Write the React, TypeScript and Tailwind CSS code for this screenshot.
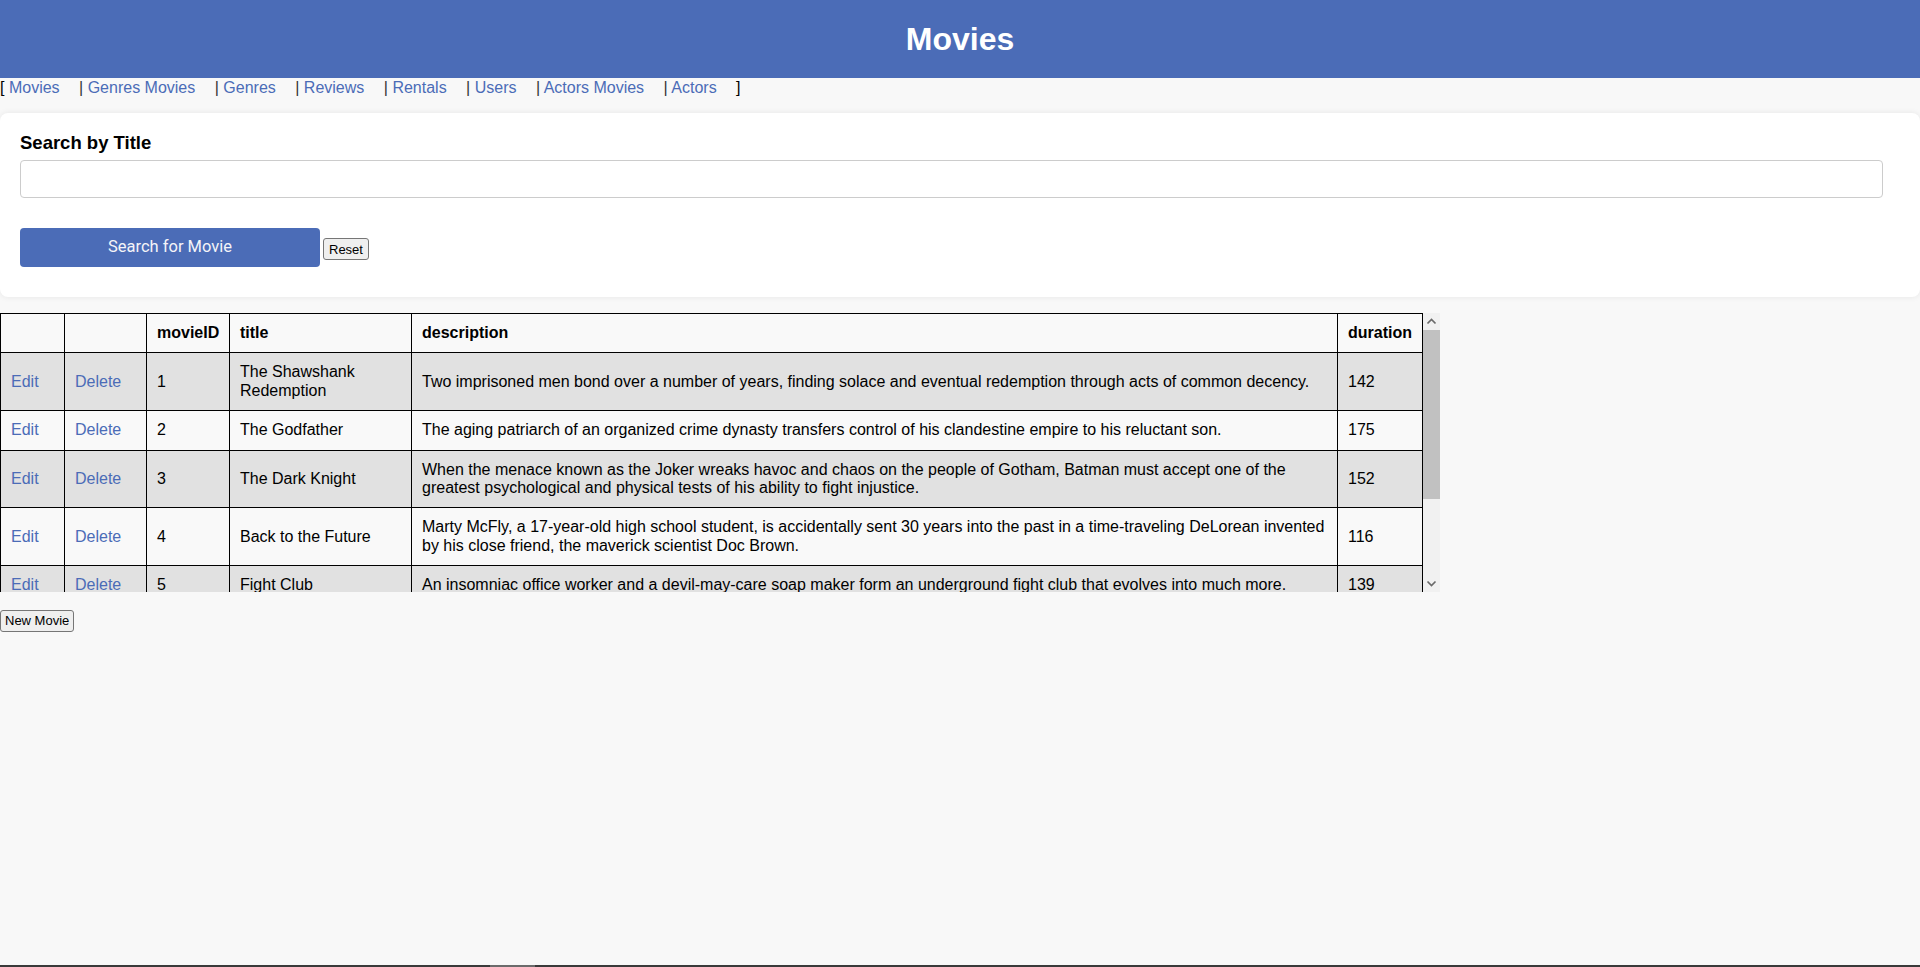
import React from "react";

const movies = [
  { id: 1, title: "The Shawshank Redemption", desc: "Two imprisoned men bond over a number of years, finding solace and eventual redemption through acts of common decency.", dur: 142 },
  { id: 2, title: "The Godfather", desc: "The aging patriarch of an organized crime dynasty transfers control of his clandestine empire to his reluctant son.", dur: 175 },
  { id: 3, title: "The Dark Knight", desc: "When the menace known as the Joker wreaks havoc and chaos on the people of Gotham, Batman must accept one of the greatest psychological and physical tests of his ability to fight injustice.", dur: 152 },
  { id: 4, title: "Back to the Future", desc: "Marty McFly, a 17-year-old high school student, is accidentally sent 30 years into the past in a time-traveling DeLorean invented by his close friend, the maverick scientist Doc Brown.", dur: 116 },
  { id: 5, title: "Fight Club", desc: "An insomniac office worker and a devil-may-care soap maker form an underground fight club that evolves into much more.", dur: 139 },
  { id: 6, title: "Inception", desc: "A thief who steals corporate secrets through the use of dream-sharing technology is given the inverse task of planting an idea into the mind of a C.E.O., but his tragic past may doom the project.", dur: 148 },
  { id: 7, title: "Pulp Fiction", desc: "The lives of two mob hitmen, a boxer, a gangster and his wife, and a pair of diner bandits intertwine in four tales of violence and redemption, told out of order.", dur: 154 },
];

const navItems = ["Movies", "Genres Movies", "Genres", "Reviews", "Rentals", "Users", "Actors Movies", "Actors"];

function Chevron({ up }: { up: boolean }) {
  return (
    <svg width="17" height="17" viewBox="0 0 17 17" className="block">
      <path
        d={up ? "M4.5 10.5 L8.5 6.5 L12.5 10.5" : "M4.5 6.5 L8.5 10.5 L12.5 6.5"}
        fill="none"
        stroke="#6a6a6a"
        strokeWidth="1.7"
      />
    </svg>
  );
}

export default function App() {
  return (
    <div className="min-h-screen flex flex-col bg-[#f8f8f8] text-black font-['Liberation_Sans',Arial,sans-serif]">
      <header className="h-[78px] bg-[#4b6cb7] flex items-center justify-center">
        <h1 className="text-[32px] font-bold text-white leading-none">Movies</h1>
      </header>

      <nav className="text-[16px] leading-[18px] mt-[1px] text-[#333] whitespace-nowrap">
        <span className="text-black">[</span>{" "}
        {navItems.map((n, i) => (
          <React.Fragment key={n}>
            {i > 0 && <>|{" "}</>}
            <a href="#" className="text-[#4b6cb7] mr-[15px]">{n}</a>{" "}
          </React.Fragment>
        ))}
        <span className="text-black">]</span>
      </nav>

      <section className="mt-[16px] bg-white rounded-[8px] shadow-[0_0_6px_rgba(0,0,0,0.08)] pt-[20px] px-[20px] pb-[30px]">
        <label className="block text-[18.5px] font-bold leading-[20px] mb-[7px]">Search by Title</label>
        <input
          type="text"
          className="block w-[calc(100%-17px)] h-[38px] border border-[#ccc] rounded-[4px] bg-white px-2 outline-none"
        />
        <div className="flex items-center gap-[3px] mt-[30px]">
          <button className="w-[300px] h-[39px] bg-[#4b6cb7] text-[#f4f4f8] rounded-[4px] text-[16.5px] font-['Roboto',sans-serif]">
            Search for Movie
          </button>
          <button className="h-[22px] bg-[#efefef] border border-[#767676] rounded-[3px] px-[5px] text-[13px] leading-[15px] text-black mt-[3px]">
            Reset
          </button>
        </div>
      </section>

      <div className="mt-[16px] w-[1440px] h-[279px] flex">
        <div className="w-[1423px] h-full overflow-hidden">
          <table className="w-full table-fixed border-collapse text-[16px] leading-[18.4px]">
            <colgroup>
              <col className="w-[64px]" />
              <col className="w-[82px]" />
              <col className="w-[83px]" />
              <col className="w-[182px]" />
              <col />
              <col className="w-[85px]" />
            </colgroup>
            <thead>
              <tr className="bg-[#f9f9f9]">
                <th className="border border-black p-[10px] text-left font-bold"></th>
                <th className="border border-black p-[10px] text-left font-bold"></th>
                <th className="border border-black p-[10px] text-left font-bold">movieID</th>
                <th className="border border-black p-[10px] text-left font-bold">title</th>
                <th className="border border-black p-[10px] text-left font-bold">description</th>
                <th className="border border-black p-[10px] text-left font-bold">duration</th>
              </tr>
            </thead>
            <tbody>
              {movies.map((m, i) => (
                <tr key={m.id} className={i % 2 === 0 ? "bg-[#e1e1e1]" : "bg-[#f9f9f9]"}>
                  <td className="border border-black p-[10px]"><a href="#" className="text-[#4b6cb7]">Edit</a></td>
                  <td className="border border-black p-[10px]"><a href="#" className="text-[#4b6cb7]">Delete</a></td>
                  <td className="border border-black p-[10px]">{m.id}</td>
                  <td className="border border-black p-[10px]">{m.title}</td>
                  <td className="border border-black p-[10px]">{m.desc}</td>
                  <td className="border border-black p-[10px]">{m.dur}</td>
                </tr>
              ))}
            </tbody>
          </table>
        </div>
        <div className="w-[17px] h-full bg-[#f1f1f1] flex flex-col">
          <Chevron up />
          <div className="h-[169px] bg-[#c1c1c1]" />
          <div className="flex-1" />
          <Chevron up={false} />
        </div>
      </div>

      <div className="mt-[16px]">
        <button className="h-[22px] bg-[#efefef] border border-[#767676] rounded-[3px] px-[4px] text-[13px] leading-[15px] text-black">
          New Movie
        </button>
      </div>

      <div className="mt-auto h-[2px] bg-[#3a3a3a] flex">
        <div className="w-[490px]" />
        <div className="w-[45px] bg-[#6b6b6b]" />
      </div>
    </div>
  );
}
